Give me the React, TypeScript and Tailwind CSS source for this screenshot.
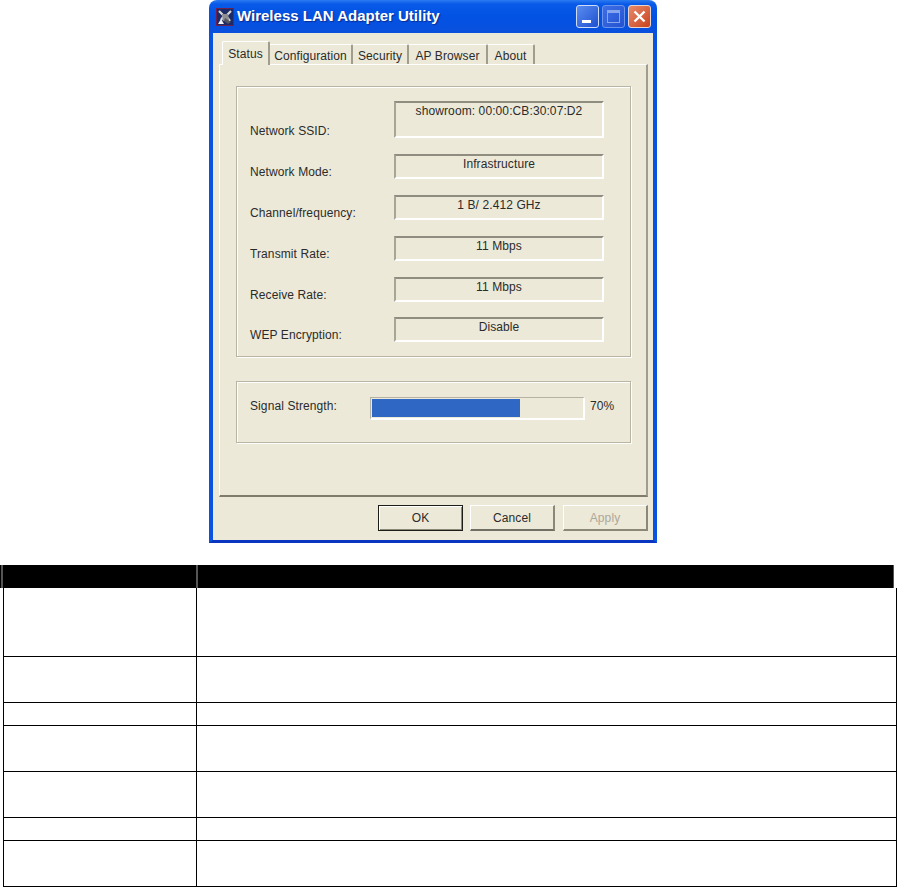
import React from 'react';

const fieldRows = [
  { label: 'Network SSID:', value: 'showroom: 00:00:CB:30:07:D2', rowClass: '', height: 'h-[37px]' },
  { label: 'Network Mode:', value: 'Infrastructure', rowClass: '', height: 'h-[25px]' },
  { label: 'Channel/frequency:', value: '1 B/ 2.412 GHz', rowClass: '', height: 'h-[25px]' },
  { label: 'Transmit Rate:', value: '11 Mbps', rowClass: '', height: 'h-[25px]' },
  { label: 'Receive Rate:', value: '11 Mbps', rowClass: '', height: 'h-[25px]' },
  { label: 'WEP Encryption:', value: 'Disable', rowClass: '-mt-[1px]', height: 'h-[25px]' },
];

const inactiveTabs = [
  { label: 'Configuration', width: 'w-[83px]' },
  { label: 'Security', width: 'w-[56px]' },
  { label: 'AP Browser', width: 'w-[79px]' },
  { label: 'About', width: 'w-[47px]' },
];

const tableRows = ['h-[69px]', 'h-[46px]', 'h-[23px]', 'h-[46px]', 'h-[46px]', 'h-[23px]', 'h-[46px]'];

const AppIcon = () => (
  <svg width="18" height="18" viewBox="0 0 18 18" className="shrink-0">
    <rect x="0.5" y="0.5" width="17" height="17" fill="#1c2a66" stroke="#6d2050" />
    <path d="M3 3 L8 8 L5 12 M15 3 L10 8 L14 13" fill="none" stroke="#d8d8d8" strokeWidth="2.2" />
    <path d="M6 6 L12 6 L13 12 L7 13 Z" fill="#8d8d92" />
    <path d="M2 16 L5 11 L8 16 Z" fill="#f2f2f2" />
    <path d="M9 10 L15 14 L12 16 L8 13 Z" fill="#55555f" />
  </svg>
);

const App: React.FC = () => {
  return (
    <div className="w-[897px] h-[887px] bg-white overflow-hidden font-['Liberation_Sans',Arial,sans-serif] text-[12px] tracking-[0.1px] text-[#2b2b2b]">
      {/* Dialog window */}
      <div className="ml-[209px] w-[448px] h-[543px] flex flex-col">
        {/* Title bar */}
        <div className="h-[33px] shrink-0 rounded-t-[8px] bg-[linear-gradient(to_bottom,#2a7cf0_0px,#0a5ae8_4px,#0252e4_16px,#0a50dc_100%)] flex items-center pl-[7px] pr-[6px]">
          <AppIcon />
          <span className="ml-[3px] text-white font-bold text-[15px] tracking-normal [text-shadow:1px_1px_1px_#0a2a90]">
            Wireless LAN Adapter Utility
          </span>
          <div className="ml-auto flex gap-[3px]">
            <div className="w-[23px] h-[23px] rounded-[3px] border border-[#cfdcf7] bg-gradient-to-br from-[#5b8cf0] to-[#1f4fd0] flex items-end pl-[5px] pb-[4px]">
              <div className="w-[9px] h-[3px] bg-white" />
            </div>
            <div className="w-[23px] h-[23px] rounded-[3px] border border-[#6d94ea] bg-gradient-to-br from-[#3f6fe6] to-[#2452d2] flex items-center justify-center">
              <div className="w-[13px] h-[13px] border border-[#86a6ee] border-t-[3px]" />
            </div>
            <div className="w-[23px] h-[23px] rounded-[3px] border border-[#e8d5cc] bg-gradient-to-br from-[#e88a6a] to-[#c8401a] flex items-center justify-center">
              <svg width="13" height="13" viewBox="0 0 13 13">
                <path d="M1.5 1.5 L11.5 11.5 M11.5 1.5 L1.5 11.5" stroke="#fff" strokeWidth="2.4" />
              </svg>
            </div>
          </div>
        </div>

        {/* Window body */}
        <div className="flex-1 flex flex-col bg-[#ece9d8] border-x-4 border-b-[3px] border-x-[#0a52e0] border-b-[#0a35c0] pl-[6px]">
          {/* Tabs */}
          <div className="h-[31px] shrink-0 flex items-end pl-[3px] relative z-10">
            <div className="w-[48px] h-[24px] -mb-[1px] bg-[#ece9d8] border-t border-l border-white border-r-2 border-r-[#a09d8c] text-center pt-[3px] rounded-t-[2px]">
              Status
            </div>
            {inactiveTabs.map(tab => (
              <div key={tab.label} className={`${tab.width} h-[20px] border-t border-white border-r-2 border-r-[#a09d8c] text-center pt-[2px] rounded-tr-[2px]`}>
                {tab.label}
              </div>
            ))}
          </div>

          {/* Tab panel */}
          <div className="w-[429px] h-[433px] shrink-0 border-t border-l border-white border-r-2 border-b-2 border-r-[#a09d8c] border-b-[#7f7c6c] pl-[16px] pt-[21px]">
            <div className="w-[395px] h-[271px] border border-[#b8b5a5] shadow-[inset_1px_1px_0_#fff,1px_1px_0_#fff] pt-[14px] pl-[13px] flex flex-col gap-[16px]">
              {fieldRows.map(row => (
                <div key={row.label} className={`flex items-end ${row.rowClass}`}>
                  <span className="w-[144px] leading-[14px]">{row.label}</span>
                  <div className={`${row.height} w-[210px] border-t-2 border-l-2 border-t-[#8f8d80] border-l-[#a8a596] border-b-2 border-r-2 border-b-white border-r-white text-center leading-[14px] pt-[1px]`}>
                    {row.value}
                  </div>
                </div>
              ))}
            </div>

            <div className="mt-[24px] w-[395px] h-[62px] border border-[#b8b5a5] shadow-[inset_1px_1px_0_#fff,1px_1px_0_#fff] pt-[16px] pl-[13px] flex items-start">
              <span className="w-[120px] leading-[16px]">Signal Strength:</span>
              <div className="w-[215px] h-[23px] border border-[#b5b2a3] border-b-white border-r-white border-b-2 border-r-2 p-[1px] -mt-[1px]">
                <div className="w-[148px] h-full bg-[#2f67c4]" />
              </div>
              <span className="ml-[5px] leading-[16px]">70%</span>
            </div>
          </div>

          {/* Dialog buttons */}
          <div className="flex pt-[8px] pl-[159px] gap-[7px]">
            <button className="w-[85px] h-[26px] border border-[#1c1c18] bg-[#ece9d8] shadow-[inset_1px_1px_0_#fff,inset_-1px_-1px_0_#8b8878]">OK</button>
            <button className="w-[85px] h-[26px] border-t border-l border-white border-r-2 border-b-2 border-r-[#8b8878] border-b-[#716f64] bg-[#ece9d8]">Cancel</button>
            <button className="ml-[1px] w-[85px] h-[26px] border-t border-l border-white border-r-2 border-b-2 border-r-[#8b8878] border-b-[#8b8878] bg-[#ece9d8] text-[#aca899]">Apply</button>
          </div>
        </div>
      </div>

      {/* Table */}
      <div className="mt-[22px] w-[894px] h-[23px] bg-black flex">
        <div className="w-[195px] ml-[1px] border-l-2 border-[#555555]" />
        <div className="flex-1 border-l-2 border-[#555555]" />
        <div className="w-[1px] bg-[#555555]" />
      </div>
      <div className="ml-[3px] w-[894px] border-x border-black">
        {tableRows.map((height, i) => (
          <div key={i} className={`${height} grid grid-cols-[193px_1fr] border-b border-black`}>
            <div className="border-r border-black" />
            <div />
          </div>
        ))}
      </div>
    </div>
  );
};

export default App;
